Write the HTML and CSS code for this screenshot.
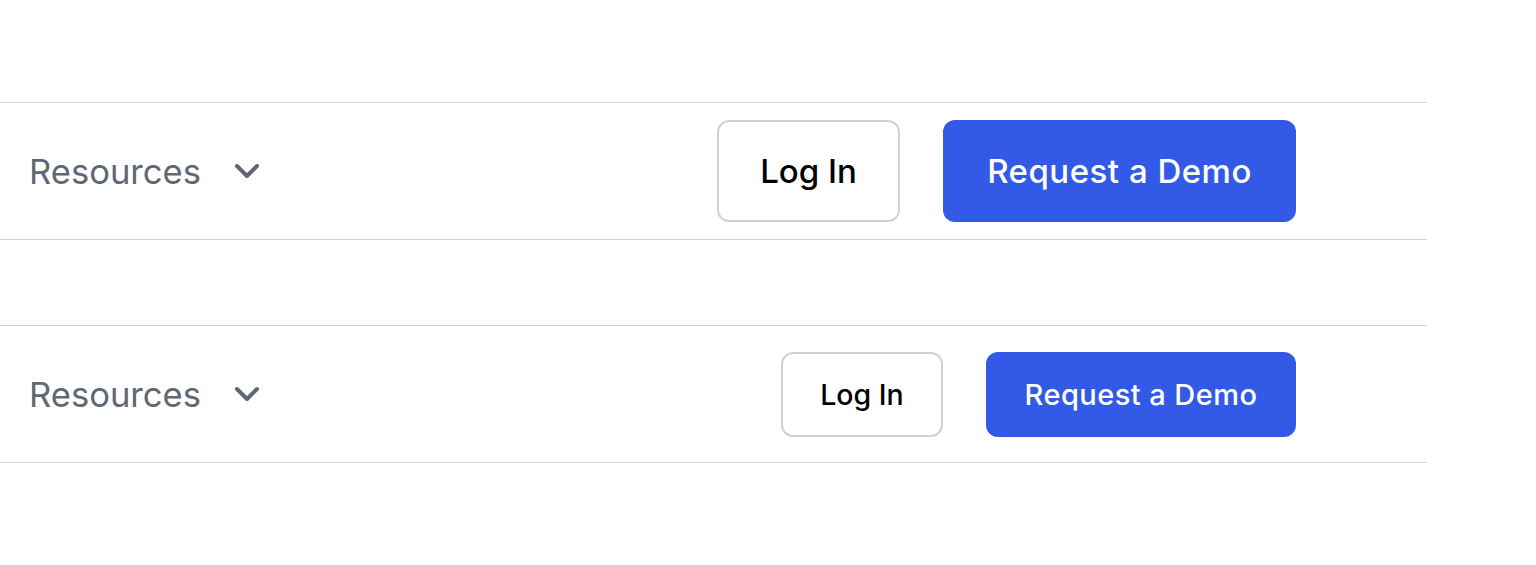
FILE: index.html
```html
<!DOCTYPE html>
<html lang="en">
  <head>
    <meta charset="UTF-8" />
    <meta name="viewport" content="width=device-width, initial-scale=1.0" />
    <title>Nav</title>
    <link rel="stylesheet" href="styles.css">
  </head>
  <body>
    <nav class="navbar navbar-large">
      <div class="nav-item">
        <span class="nav-label">Resources</span>
        <svg class="chevron" width="26" height="16" viewBox="0 0 26 16">
          <polyline points="3,3 13,13 23,3" />
        </svg>
      </div>
      <div class="nav-actions">
        <a class="btn btn-outline" href="#">Log In</a>
        <a class="btn btn-primary" href="#">Request a Demo</a>
      </div>
    </nav>

    <nav class="navbar navbar-small">
      <div class="nav-item">
        <span class="nav-label">Resources</span>
        <svg class="chevron" width="26" height="16" viewBox="0 0 26 16">
          <polyline points="3,3 13,13 23,3" />
        </svg>
      </div>
      <div class="nav-actions">
        <a class="btn btn-outline" href="#">Log In</a>
        <a class="btn btn-primary" href="#">Request a Demo</a>
      </div>
    </nav>
  </body>
</html>
```

FILE: styles.css
```css
body {
  margin: 0;
  padding: 102px 0 0;
  background: #ffffff;
  font-family: "Inter", "Liberation Sans", sans-serif;
}

.navbar {
  width: 1427px;
  box-sizing: border-box;
  display: flex;
  align-items: center;
  justify-content: space-between;
  padding: 0 131px 0 29px;
  border-top: 1px solid #d2d2d2;
  border-bottom: 1px solid #d2d2d2;
  height: 138px;
}

.navbar-small {
  margin-top: 85px;
}

.nav-item {
  display: flex;
  align-items: center;
  gap: 33px;
}

.nav-label {
  font-size: 34.6px;
  color: #5f6775;
}

.chevron polyline {
  fill: none;
  stroke: #5f6775;
  stroke-width: 4;
  stroke-linecap: round;
  stroke-linejoin: round;
}

.nav-actions {
  display: flex;
  align-items: center;
  gap: 43px;
}

.btn {
  display: flex;
  align-items: center;
  justify-content: center;
  box-sizing: border-box;
  border-radius: 12px;
  text-decoration: none;
  font-size: 33px;
  font-weight: 500;
  height: 102px;
}

.btn-outline {
  border: 2px solid #cfd2d5;
  color: #000000;
  width: 183px;
}

.btn-primary {
  background-color: #335ae7;
  color: #ffffff;
  width: 353px;
  letter-spacing: 0.5px;
}

.navbar-small .btn {
  font-size: 28.5px;
  height: 85px;
}

.navbar-small .btn-outline {
  width: 162px;
}

.navbar-small .btn-primary {
  width: 310px;
  font-size: 29px;
  letter-spacing: 0.45px;
}
```
